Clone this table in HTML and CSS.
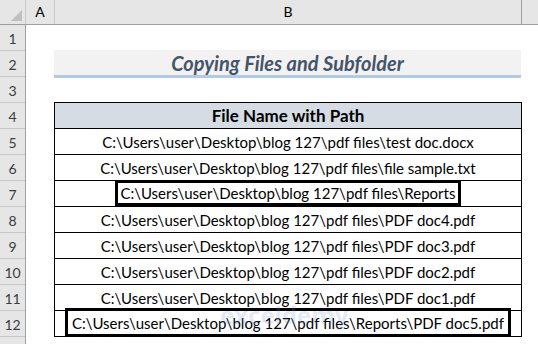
FILE: index.html
```html
<!DOCTYPE html>
<html lang="en">
<head>
  <meta charset="UTF-8" />
  <title>Copying Files and Subfolder</title>
  <link rel="stylesheet" href="styles.css">
</head>
<body>

  <!-- Cabecera de columnas -->
  <div class="col-heads">
    <div class="corner"><span class="tri"></span></div>
    <div class="col-head col-a">A</div>
    <div class="col-head col-b">B</div>
    <div class="col-head col-c"></div>
  </div>

  <div class="sheet">
    <div class="row-heads">
      <div class="row-num">1</div>
      <div class="row-num">2</div>
      <div class="row-num">3</div>
      <div class="row-num">4</div>
      <div class="row-num">5</div>
      <div class="row-num">6</div>
      <div class="row-num">7</div>
      <div class="row-num">8</div>
      <div class="row-num">9</div>
      <div class="row-num">10</div>
      <div class="row-num">11</div>
      <div class="row-num">12</div>
      <div class="row-num"></div>
    </div>

    <div class="cells">
      <div class="title">Copying Files and Subfolder</div>

      <div class="paths">
        <div class="cell head">File Name with Path</div>
        <div class="cell">C:\Users\user\Desktop\blog 127\pdf files\test doc.docx</div>
        <div class="cell">C:\Users\user\Desktop\blog 127\pdf files\file sample.txt</div>
        <div class="cell"><span class="mark">C:\Users\user\Desktop\blog 127\pdf files\Reports</span></div>
        <div class="cell">C:\Users\user\Desktop\blog 127\pdf files\PDF doc4.pdf</div>
        <div class="cell">C:\Users\user\Desktop\blog 127\pdf files\PDF doc3.pdf</div>
        <div class="cell">C:\Users\user\Desktop\blog 127\pdf files\PDF doc2.pdf</div>
        <div class="cell">C:\Users\user\Desktop\blog 127\pdf files\PDF doc1.pdf</div>
        <div class="cell"><span class="mark wide">C:\Users\user\Desktop\blog 127\pdf files\Reports\PDF doc5.pdf</span></div>
      </div>
    </div>

    <!-- marca de agua -->
    <div class="watermark">
      <span class="wm-name">exceldemy</span>
    </div>
  </div>

</body>
</html>
```

FILE: styles.css
```css
html, body {
  margin: 0;
  padding: 0;
  background-color: #ffffff;
  font-family: 'Lato', 'Open Sans', sans-serif;
  color: #000000;
  overflow: hidden;
}
.col-heads {
  display: flex;
  height: 24px;
  background-color: #e6e6e6;
  border-bottom: 1px solid #9f9f9f;
}
.corner {
  width: 25px;
  border-right: 1px solid #c8c8c8;
  position: relative;
}
.tri {
  position: absolute;
  right: 3px;
  bottom: 3px;
  width: 0;
  height: 0;
  border-left: 11px solid transparent;
  border-bottom: 11px solid #c0c0c0;
}
.col-head {
  font-size: 14px;
  line-height: 24px;
  text-align: center;
  border-right: 1px solid #c8c8c8;
  box-sizing: border-box;
}
.col-a {
  width: 29px;
}
.col-b {
  width: 467px;
  border-right-color: #9f9f9f;
}
.col-c {
  flex-grow: 1;
  border-right: none;
}
.sheet {
  display: flex;
  position: relative;
}
.row-heads {
  width: 25px;
  background-color: #e6e6e6;
  border-right: 1px solid #9f9f9f;
  flex-shrink: 0;
}
.row-num {
  height: 25px;
  line-height: 27px;
  border-bottom: 1px solid #c8c8c8;
  text-align: center;
  font-size: 14px;
  color: #3c3c3c;
}
.cells {
  padding-left: 28px;
  padding-top: 25px;
}
.title {
  width: 467px;
  height: 25px;
  line-height: 27px;
  background-color: #f2f2f2;
  border-bottom: 3px solid #b1cbe6;
  text-align: center;
  font-size: 20px;
  font-weight: 700;
  font-style: italic;
  color: #44546a;
}
.paths {
  margin-top: 24px;
  width: 466px;
  border: 1px solid #000000;
  border-bottom: none;
}
.cell {
  height: 25px;
  line-height: 26px;
  border-bottom: 1px solid #000000;
  text-align: center;
  font-size: 15px;
}
.head {
  background-color: #d6dce4;
  font-weight: 700;
  font-size: 17px;
}
.mark {
  display: inline-block;
  height: 20px;
  line-height: 21px;
  padding: 0 3px;
  border: 3px solid #000000;
  margin-top: -1px;
  vertical-align: top;
}
.wide {
  height: 23px;
  line-height: 25px;
  margin-top: -3px;
  padding: 0 4px;
}
.watermark {
  position: absolute;
  left: 220px;
  top: 278px;
  color: rgba(110, 140, 220, 0.2);
  font-family: 'Open Sans', sans-serif;
  pointer-events: none;
}
.wm-name {
  font-size: 24px;
  font-weight: 700;
  line-height: 24px;
}
```
